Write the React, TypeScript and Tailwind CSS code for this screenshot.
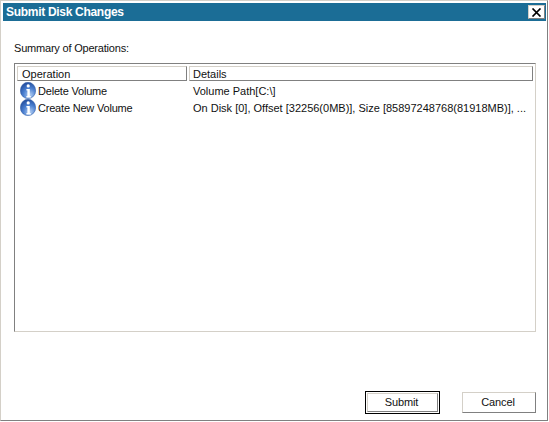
const font = "font-['Liberation_Sans',Arial,sans-serif]";

function InfoIcon() {
  return (
    <svg width="16" height="17" viewBox="0 0 16 17" className="shrink-0">
      <defs>
        <radialGradient id="ball" cx="0.62" cy="0.78" r="0.85">
          <stop offset="0" stopColor="#b5d0f4" />
          <stop offset="0.5" stopColor="#4a7fd0" />
          <stop offset="1" stopColor="#1c4596" />
        </radialGradient>
      </defs>
      <ellipse cx="8" cy="8.5" rx="7.7" ry="8.2" fill="url(#ball)" stroke="#2f5aa5" strokeWidth="0.5" />
      <circle cx="8.2" cy="3.9" r="1.6" fill="#fff" />
      <path d="M6.4 6.9h3.4v7h1v1.5H6.4v-1.5h1V8.4h-1z" fill="#fff" />
    </svg>
  );
}

function HeaderCell({ label, className }: { label: string; className: string }) {
  return (
    <div className={`h-[15px] border border-[#d4d0c8] border-r-[#808080] border-b-[#808080] text-[11px] leading-[15px] text-[#111] ${className}`}>
      {label}
    </div>
  );
}

function Row({ op, details }: { op: string; details: string }) {
  return (
    <div className="flex h-[17px] items-center text-[11px] text-[#111]">
      <div className="flex w-[175px] shrink-0 items-center gap-[2px] pl-[3px]">
        <InfoIcon />
        <span className="pt-[2px] tracking-[-0.2px]">{op}</span>
      </div>
      <div className="whitespace-nowrap pt-[2px] pl-px">{details}</div>
    </div>
  );
}

function Button({ label, primary }: { label: string; primary?: boolean }) {
  const inner = (
    <div className="flex h-full w-full items-center justify-center border border-[#d4d0c8] border-r-[#808080] border-b-[#808080] bg-white pr-[2px] text-[11px] tracking-[-0.1px] text-[#111]">
      {label}
    </div>
  );
  if (primary) {
    return <div className="h-[23px] w-[75px] border border-black bg-white p-px">{inner}</div>;
  }
  return <div className="h-[21px] w-[74px]">{inner}</div>;
}

export default function App() {
  return (
    <div className={`h-[422px] w-[549px] bg-white ${font}`}>
      <div className="flex h-[421px] w-[548px] flex-col border border-[#d4d0c8] border-r-[#808080] border-b-[#808080] pt-[2px] pr-px pl-[2px]">
        <div className="flex h-[18px] shrink-0 items-center justify-between bg-[#1b6d96] pr-px pl-[3px]">
          <span className="text-[12px] font-bold tracking-[-0.3px] text-white">Submit Disk Changes</span>
          <div className="flex h-[14px] w-[17px] items-center justify-center border border-[#d4d0c8] border-r-[#808080] border-b-[#808080] bg-white">
            <svg width="11" height="9" viewBox="0 0 11 9">
              <path d="M1.5 0.5l8 8M9.5 0.5l-8 8" stroke="#000" strokeWidth="1.7" />
            </svg>
          </div>
        </div>
        <div className="flex flex-1 flex-col pt-[21px] pr-[10px] pl-[11px]">
          <div className="h-[13px] text-[11px] leading-[13px] tracking-[-0.2px] text-[#111]">Summary of Operations:</div>
          <div className="mt-[8px] h-[269px] border border-[#d4d0c8] border-t-[#808080] border-l-[#808080] p-[2px]">
            <div className="flex">
              <HeaderCell label="Operation" className="w-[170px] pl-[4px]" />
              <div className="w-[2px]" />
              <HeaderCell label="Details" className="flex-1 pl-[3px]" />
            </div>
            <div className="mt-px">
              <Row op="Delete Volume" details="Volume Path[C:\]" />
              <Row op="Create New Volume" details="On Disk [0], Offset [32256(0MB)], Size [85897248768(81918MB)], ..." />
            </div>
          </div>
          <div className="mt-[59px] flex items-center justify-end gap-[22px]">
            <Button label="Submit" primary />
            <Button label="Cancel" />
          </div>
        </div>
      </div>
    </div>
  );
}
